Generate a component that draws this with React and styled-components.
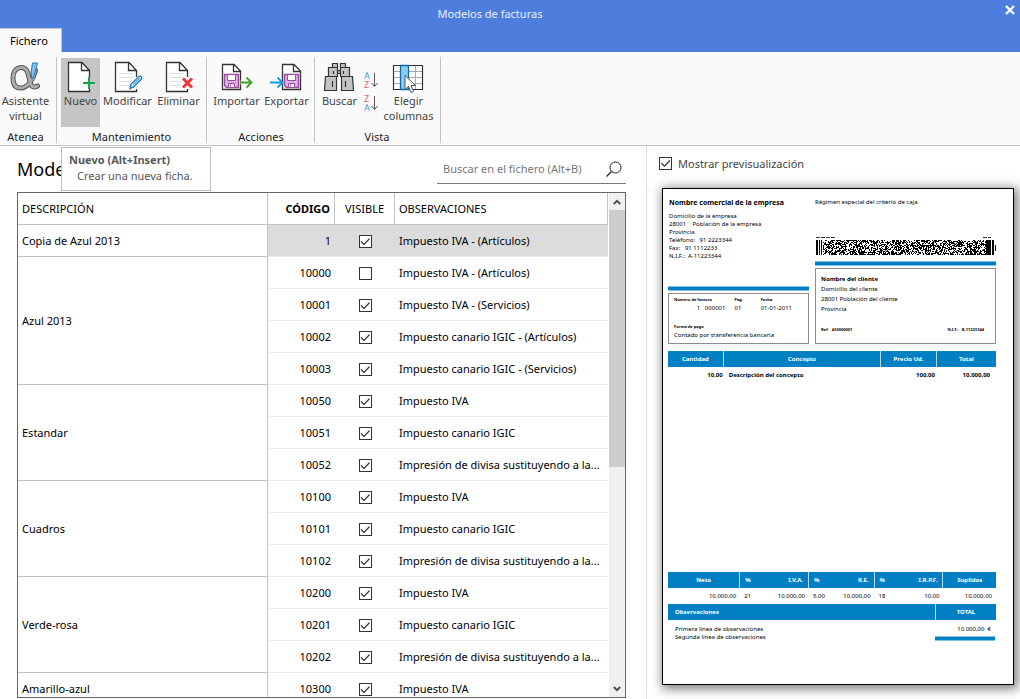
import React from "react";
import styled, { createGlobalStyle } from "styled-components";

const models = [
  {
    name: "Copia de Azul 2013",
    rows: [{ code: 1, visible: true, notes: "Impuesto IVA - (Artículos)", selected: true }],
  },
  {
    name: "Azul 2013",
    rows: [
      { code: 10000, visible: false, notes: "Impuesto IVA - (Artículos)" },
      { code: 10001, visible: true, notes: "Impuesto IVA - (Servicios)" },
      { code: 10002, visible: true, notes: "Impuesto canario IGIC - (Artículos)" },
      { code: 10003, visible: true, notes: "Impuesto canario IGIC - (Servicios)" },
    ],
  },
  {
    name: "Estandar",
    rows: [
      { code: 10050, visible: true, notes: "Impuesto IVA" },
      { code: 10051, visible: true, notes: "Impuesto canario IGIC" },
      { code: 10052, visible: true, notes: "Impresión de divisa sustituyendo a la..." },
    ],
  },
  {
    name: "Cuadros",
    rows: [
      { code: 10100, visible: true, notes: "Impuesto IVA" },
      { code: 10101, visible: true, notes: "Impuesto canario IGIC" },
      { code: 10102, visible: true, notes: "Impresión de divisa sustituyendo a la..." },
    ],
  },
  {
    name: "Verde-rosa",
    rows: [
      { code: 10200, visible: true, notes: "Impuesto IVA" },
      { code: 10201, visible: true, notes: "Impuesto canario IGIC" },
      { code: 10202, visible: true, notes: "Impresión de divisa sustituyendo a la..." },
    ],
  },
  {
    name: "Amarillo-azul",
    rows: [{ code: 10300, visible: true, notes: "Impuesto IVA" }],
  },
];

const App = () => (
  <Page>
    <GlobalStyle />
    <TitleBar>
      <WindowTitle>Modelos de facturas</WindowTitle>
      <CloseButton aria-label="Cerrar">
        <svg width="10" height="10" viewBox="0 0 10 10">
          <path d="M1 1l8 8M9 1l-8 8" stroke="#fff" strokeWidth="2.4" />
        </svg>
      </CloseButton>
      <Tab>Fichero</Tab>
    </TitleBar>
    <Ribbon />
    <Main>
      <ListPane>
        <ListHeader>
          <Heading>Modelos de facturas</Heading>
          <SearchBox>
            <SearchInput aria-label="Buscar" placeholder="Buscar en el fichero (Alt+B)" />
            <svg width="16" height="16" viewBox="0 0 16 16" fill="none" stroke="#222">
              <circle cx="9.5" cy="6.5" r="5.5" />
              <path d="M5.5 10.5L.5 15.5" strokeWidth="1.3" />
            </svg>
          </SearchBox>
        </ListHeader>
        <ModelTable />
      </ListPane>
      <PreviewPane>
        <PreviewToggle>
          <Checkbox defaultChecked />
          Mostrar previsualización
        </PreviewToggle>
        <Invoice />
      </PreviewPane>
    </Main>
  </Page>
);

const Ribbon = () => (
  <RibbonBar>
    <Group $start={0} $end={5}>
      <Tools>
        <Tool $width={51}>
          <AlphaIcon />
          <span>
            Asistente
            <br />
            virtual
          </span>
        </Tool>
      </Tools>
      <GroupLabel>Atenea</GroupLabel>
    </Group>
    <Group $start={4} $end={4}>
      <Tools>
        <TipAnchor>
          <Tool $width={39} $active>
            <NewIcon />
            <span>Nuevo</span>
          </Tool>
          <Tooltip role="tooltip">
            <strong>Nuevo (Alt+Insert)</strong>
            <p>Crear una nueva ficha.</p>
          </Tooltip>
        </TipAnchor>
        <Tool $width={55}>
          <EditIcon />
          <span>Modificar</span>
        </Tool>
        <Tool $width={47}>
          <DeleteIcon />
          <span>Eliminar</span>
        </Tool>
      </Tools>
      <GroupLabel>Mantenimiento</GroupLabel>
    </Group>
    <Group $start={4} $end={3}>
      <Tools>
        <Tool $width={51}>
          <ImportIcon />
          <span>Importar</span>
        </Tool>
        <Tool $width={49}>
          <ExportIcon />
          <span>Exportar</span>
        </Tool>
      </Tools>
      <GroupLabel>Acciones</GroupLabel>
    </Group>
    <Group $start={4} $end={5}>
      <Tools>
        <Tool $width={41}>
          <FindIcon />
          <span>Buscar</span>
        </Tool>
        <SortTools>
          <SortButton aria-label="Orden ascendente">
            <SortIcon top="A" bottom="Z" />
          </SortButton>
          <SortButton aria-label="Orden descendente">
            <SortIcon top="Z" bottom="A" />
          </SortButton>
        </SortTools>
        <Tool $width={53}>
          <ColumnsIcon />
          <span>
            Elegir
            <br />
            columnas
          </span>
        </Tool>
      </Tools>
      <GroupLabel>Vista</GroupLabel>
    </Group>
  </RibbonBar>
);

const ModelTable = () => (
  <TableFrame>
    <TableWrap>
      <Grid>
        <colgroup>
          <Col $width="250px" />
          <Col $width="67px" />
          <Col $width="60px" />
          <Col $width="auto" />
        </colgroup>
        <thead>
          <tr>
            <HeadCell>DESCRIPCIÓN</HeadCell>
            <HeadCell $align="right" $bold>CÓDIGO</HeadCell>
            <HeadCell $align="center">VISIBLE</HeadCell>
            <HeadCell>OBSERVACIONES</HeadCell>
          </tr>
        </thead>
        <tbody>
          {models.map((model) =>
            model.rows.map((row, i) => (
              <Row key={row.code} $selected={row.selected}>
                {i === 0 && <GroupCell rowSpan={model.rows.length}>{model.name}</GroupCell>}
                <Cell $align="right">{row.code}</Cell>
                <Cell $align="center">
                  <Checkbox defaultChecked={row.visible} aria-label={`Visible ${row.code}`} />
                </Cell>
                <Cell>{row.notes}</Cell>
              </Row>
            ))
          )}
        </tbody>
      </Grid>
    </TableWrap>
    <ScrollBar>
      <ScrollArrow aria-label="Subir">
        <svg width="8" height="6" viewBox="0 0 8 6" fill="none" stroke="#505050" strokeWidth="2">
          <path d="M.8 5L4 1.8 7.2 5" />
        </svg>
      </ScrollArrow>
      <ScrollThumb />
      <ScrollArrow aria-label="Bajar">
        <svg width="8" height="6" viewBox="0 0 8 6" fill="none" stroke="#505050" strokeWidth="2">
          <path d="M.8 1L4 4.2 7.2 1" />
        </svg>
      </ScrollArrow>
    </ScrollBar>
  </TableFrame>
);

const Invoice = () => (
  <Paper>
    <InvoiceTop>
      <InvoiceSide>
        <Company>Nombre comercial de la empresa</Company>
        <Address>
          Domicilio de la empresa
          <br />
          28001 &nbsp;&nbsp; Población de la empresa
          <br />
          Provincia
          <br />
          Teléfono: &nbsp; 91 2223344
          <br />
          Fax: &nbsp; 91 1112233
          <br />
          N.I.F.: &nbsp;A-11223344
        </Address>
        <Stripe $push />
        <NumberBox>
          <NumberGrid>
            <TinyLabel>Número de factura</TinyLabel>
            <TinyLabel>Pag.</TinyLabel>
            <TinyLabel>Fecha</TinyLabel>
            <NumberValue>1 &nbsp; 000001</NumberValue>
            <span>01</span>
            <span>01-01-2011</span>
          </NumberGrid>
          <div>
            <TinyLabel>Forma de pago</TinyLabel>
            <div>Contado por transferencia bancaria</div>
          </div>
        </NumberBox>
      </InvoiceSide>
      <InvoiceSide>
        <Regime>Régimen especial del criterio de caja</Regime>
        <Barcode />
        <Stripe />
        <ClientBox>
          <div>
            <strong>Nombre del cliente</strong>
            <br />
            Domicilio del cliente
            <br />
            28001 Población del cliente
            <br />
            Provincia
          </div>
          <ClientRefs>
            <TinyLabel>Ref: &nbsp; 430000001</TinyLabel>
            <TinyLabel>N.I.F.: &nbsp; B-11223344</TinyLabel>
          </ClientRefs>
        </ClientBox>
      </InvoiceSide>
    </InvoiceTop>

    <DocTable>
      <colgroup>
        <Col $width="17%" />
        <Col $width="48%" />
        <Col $width="17%" />
        <Col $width="18%" />
      </colgroup>
      <thead>
        <tr>
          <DocHead $divider>Cantidad</DocHead>
          <DocHead $divider>Concepto</DocHead>
          <DocHead $divider>Precio Ud.</DocHead>
          <DocHead>Total</DocHead>
        </tr>
      </thead>
      <tbody>
        <tr>
          <DocCell $bold $align="right" $pad={1}>10,00</DocCell>
          <DocCell $bold $pad={5}>Descripción del concepto</DocCell>
          <DocCell $bold $align="right" $pad={2}>100,00</DocCell>
          <DocCell $bold $align="right" $pad={6}>10.000,00</DocCell>
        </tr>
      </tbody>
    </DocTable>

    <Footer>
      <DocTable>
        <colgroup>
          <Col $width="22%" />
          <Col $width="7%" />
          <Col $width="14%" />
          <Col $width="6%" />
          <Col $width="14%" />
          <Col $width="6%" />
          <Col $width="15%" />
          <Col $width="16%" />
        </colgroup>
        <thead>
          <tr>
            <DocHead $divider>Neto</DocHead>
            <DocHead $align="left">%</DocHead>
            <DocHead $align="right" $divider>I.V.A.</DocHead>
            <DocHead $align="left">%</DocHead>
            <DocHead $align="right" $divider>R.E.</DocHead>
            <DocHead $align="left">%</DocHead>
            <DocHead $align="right" $divider>I.R.P.F.</DocHead>
            <DocHead>Suplidos</DocHead>
          </tr>
        </thead>
        <tbody>
          <tr>
            <DocCell $align="right">10.000,00</DocCell>
            <DocCell>21</DocCell>
            <DocCell $align="right">10.000,00</DocCell>
            <DocCell>5,00</DocCell>
            <DocCell $align="right">10.000,00</DocCell>
            <DocCell>18</DocCell>
            <DocCell $align="right">10,00</DocCell>
            <DocCell $align="right">10.000,00</DocCell>
          </tr>
        </tbody>
      </DocTable>
      <NotesHead>
        <NotesTitle>Observaciones</NotesTitle>
        <TotalTitle>TOTAL</TotalTitle>
      </NotesHead>
      <NotesBody>
        <div>
          Primera línea de observaciones
          <br />
          Segunda línea de observaciones
        </div>
        <Total>
          <TotalValue>10.000,00 &nbsp;€</TotalValue>
          <Stripe />
        </Total>
      </NotesBody>
    </Footer>
  </Paper>
);

/* dense matrix code: guard bars at both ends, noise in the middle */
const Barcode = () => {
  let seed = 7;
  let d = "M1 4h2v15h-2zM4 4h1v15h-1zM6 4h1v15h-1zM171 4h5v15h-5zM177 4h2v15h-2zM180 9h1v6h-1z";
  for (let y = 4; y < 19; y += 1) {
    for (let x = 8; x < 171; x += 1) {
      seed ^= seed << 13;
      seed ^= seed >>> 17;
      seed ^= seed << 5;
      if ((seed >>> 0) % 100 < 54) d += `M${x} ${y}h1v1h-1z`;
    }
  }
  return (
    <BarcodeSvg viewBox="0 0 181 20" preserveAspectRatio="none" shapeRendering="crispEdges">
      <path d={d} />
      <path d="M1 1.5h19M168 1.5h8" stroke="#333" strokeDasharray="4 1" />
    </BarcodeSvg>
  );
};

const Icon = ({ children }) => (
  <svg width="33" height="32" viewBox="0 0 33 32" fill="none">
    {children}
  </svg>
);

const Sheet = ({ lines }) => (
  <>
    <path d="M4.5 1.5H18L25.5 9.5V30.5H4.5z" fill="#fff" />
    <path d="M25.5 16V9.5L18 1.5H4.5V30.5H25.5V28M17.5 1.5V9.5H25.5" stroke="#333" strokeWidth="1.3" />
    {lines && <path d="M8 12.5h14M8 16.5h14M8 20.5h12M8 24.5h11" stroke="#ddd" />}
  </>
);

const AlphaIcon = () => (
  <Icon>
    {["#555", "#aaa"].map((color, i) => (
      <path
        key={color}
        d="M26.5 9.5C24.5 18 19 27 11.5 27C6 27 4 22.5 4 17C4 11 7 6.5 12.5 6.5C18 6.5 19 12 20.5 18.5C21.5 24 23 28 28.5 25"
        stroke={color}
        strokeWidth={i ? 3 : 5}
        strokeLinecap="round"
      />
    ))}
    <path d="M23.5 2H28.5L25.5 14L23 18L22 12z" fill="#7fc0f2" stroke="#1b78c0" />
  </Icon>
);

const NewIcon = () => (
  <Icon>
    <Sheet />
    <path d="M25 16v12M19 22h12" stroke="#10a64a" strokeWidth="2" />
  </Icon>
);

const EditIcon = () => (
  <Icon>
    <Sheet lines />
    <path d="M19 27.5L20 23L28 15.5C30 14.5 31.5 16 30.5 18L22.5 26z" fill="#d9eefb" stroke="#1c80c8" strokeWidth="1.4" />
    <path d="M22 23.5L28.5 17.5" stroke="#1c80c8" />
  </Icon>
);

const DeleteIcon = () => (
  <Icon>
    <Sheet lines />
    <path d="M21 17.5l9 9M30 17.5l-9 9" stroke="#ee3838" strokeWidth="3" />
  </Icon>
);

const DiskSheet = () => (
  <>
    <path d="M2.5 3.5H14L20.5 10V28.5H2.5z" fill="#fff" stroke="#333" strokeWidth="1.3" />
    <path d="M13.5 3.5V10.5H20.5" stroke="#333" strokeWidth="1.3" />
    <path d="M4.5 13.5H18.5V26.5H6.5L4.5 24.5z" fill="#dbb3df" stroke="#9a4aa2" strokeWidth="1.4" />
    <path d="M7.5 13.5H15.5V19.5H7.5zM8.5 22.5H14.5V26.5H8.5z" fill="#fff" stroke="#9a4aa2" />
    <path d="M10.5 23.5v2" stroke="#9a4aa2" />
  </>
);

const ImportIcon = () => (
  <Icon>
    <DiskSheet />
    <path d="M20.5 21.5H31M27 16l5 5.5L27 27" stroke="#fafafa" strokeWidth="4" />
    <path d="M20 21.5H31M26.5 16.5l5 5L26.5 26.5" stroke="#43a02c" strokeWidth="1.8" />
  </Icon>
);

const ExportIcon = () => (
  <Icon>
    <g transform="translate(10 0)">
      <DiskSheet />
    </g>
    <path d="M0 21.5H12M7.5 16.5l5 5L7.5 26.5" stroke="#0d9fe0" strokeWidth="1.8" />
  </Icon>
);

const FindIcon = () => (
  <Icon>
    <g fill="#c3c3c3" stroke="#333" strokeWidth="1.2">
      <path d="M14.5 9.5H17.5V12.5H14.5z" />
      <path d="M9.5 2.5H14.5V6.5H9.5zM17.5 2.5H22.5V6.5H17.5z" />
      <path d="M5.5 6.5H14.5V15.5H5.5zM17.5 6.5H26.5V15.5H17.5z" />
      <path d="M2.5 15.5H13.5V29.5H1.5zM18.5 15.5H29.5L30.5 29.5H18.5z" />
      <path d="M10.5 10v3M20.5 10v3M9.5 20v6M22.5 20v6" />
    </g>
  </Icon>
);

const letterColors = { A: "#3d9bdc", Z: "#ee5a5a" };

const SortIcon = ({ top, bottom }) => (
  <SortSvg width="16" height="18" viewBox="0 0 16 18">
    <text x="0" y="8" fill={letterColors[top]}>{top}</text>
    <text x="0" y="17" fill={letterColors[bottom]}>{bottom}</text>
    <path d="M10.5 2v13M7.5 12l3 3.5 3-3.5" fill="none" stroke="#555" />
  </SortSvg>
);

const ColumnsIcon = () => (
  <Icon>
    <path d="M1.5 4.5H30.5V28.5H1.5z" fill="#fff" />
    <path d="M2 10.5H30M2 16.5H30M2 22.5H30M23.5 5V28" stroke="#aaa" />
    <path d="M1.5 4.5H30.5V28.5H1.5z" stroke="#333" strokeWidth="1.2" />
    <path d="M8.5 4.5H16.5V28.5H8.5z" fill="#8ecbf2" stroke="#1468ac" strokeWidth="1.3" />
    <path d="M13 14.5V28.5L16.5 25.5L19 31.5L21.5 30.5L19 24.5H23.5z" fill="#fff" stroke="#555" />
  </Icon>
);

export default App;

// page frame
const GlobalStyle = createGlobalStyle`
  * {
    box-sizing: border-box;
  }

  body {
    margin: 0;
    background: #fff;
    color: #000;
    font-family: "Noto Sans", "Open Sans", sans-serif;
    font-size: 11px;
  }

  button, input {
    font: inherit;
    color: inherit;
    padding: 0;
    border: none;
    background: none;
  }
`;

const Page = styled.div`
  display: flex;
  flex-direction: column;
  height: 100vh;
  overflow: hidden;
`;

const TitleBar = styled.header`
  display: grid;
  grid-template-columns: 1fr 30px;
  grid-template-rows: 28px 24px;
  background: #4e7edd;
`;

const WindowTitle = styled.div`
  padding-right: 10px;
  color: #e9effb;
  line-height: 28px;
  text-align: center;
`;

const CloseButton = styled.button`
  display: flex;
  justify-content: flex-end;
  padding: 5px;
`;

const Tab = styled.button`
  justify-self: start;
  padding: 0 13px 0 10px;
  border-top: 1px solid #c6c6c6;
  border-right: 1px solid #c6c6c6;
  background: #fafafa;
`;

// ribbon
const RibbonBar = styled.div`
  display: flex;
  padding: 5px 0 2px;
  border-bottom: 1px solid #c3c3c3;
  background: #fafafa;
`;

const Group = styled.div`
  display: flex;
  flex-direction: column;
  padding: 1px ${(p) => p.$end}px 0 ${(p) => p.$start}px;
  border-right: 1px solid #c3c3c3;
`;

const Tools = styled.div`
  display: flex;
`;

const Tool = styled.button`
  display: flex;
  flex-direction: column;
  align-items: center;
  width: ${(p) => p.$width}px;
  height: 69px;
  padding-top: 3px;
  background: ${(p) => (p.$active ? "#c5c5c5" : "transparent")};
  color: #444;
  line-height: 15px;
  text-align: center;
  white-space: nowrap;
`;

const GroupLabel = styled.div`
  margin-top: 4px;
  color: #222;
  line-height: 12px;
  text-align: center;
`;

const SortTools = styled.div`
  display: flex;
  flex-direction: column;
  gap: 4px;
  padding: 13px 0 0 2px;
`;

const SortButton = styled.button`
  width: 20px;
  height: 19px;
`;

const SortSvg = styled.svg`
  font-size: 9px;
  overflow: visible;
`;

const TipAnchor = styled.div`
  position: relative;
`;

const Tooltip = styled.div`
  position: absolute;
  z-index: 2;
  top: 89px;
  left: 0;
  width: 150px;
  padding: 4px 7px 6px;
  border: 1px solid #bdbdbd;
  background: #fff;
  color: #575757;
  line-height: 16px;
  white-space: nowrap;

  p {
    margin: 0 0 0 8px;
  }
`;

// list of models
const Main = styled.main`
  display: grid;
  grid-template-columns: minmax(0, 647fr) minmax(0, 373fr);
  flex: 1;
  min-height: 0;
`;

const ListPane = styled.section`
  display: flex;
  flex-direction: column;
  min-height: 0;
  padding: 0 20px 1px 17px;
  border-right: 1px solid #dcdcdc;
`;

const ListHeader = styled.div`
  display: flex;
  align-items: flex-start;
  justify-content: space-between;
  height: 46px;
  padding-top: 8px;
`;

const Heading = styled.h1`
  margin: 0;
  font-size: 18px;
  font-weight: 400;
  line-height: 30px;
`;

const SearchBox = styled.div`
  display: flex;
  align-items: center;
  width: 189px;
  height: 30px;
  padding: 0 4px 0 6px;
  border-bottom: 1px solid #7a7a7a;
`;

const SearchInput = styled.input`
  flex: 1;
  min-width: 0;
  outline: none;

  &::placeholder {
    color: #777;
  }
`;

const TableFrame = styled.div`
  display: flex;
  flex: 1;
  min-height: 0;
  border: 1px solid #666;
`;

const TableWrap = styled.div`
  flex: 1;
  min-width: 0;
  margin-right: 1px;
  overflow: hidden;
`;

const Grid = styled.table`
  width: 100%;
  border-spacing: 0;
  table-layout: fixed;
`;

const Col = styled.col`
  width: ${(p) => p.$width};
`;

const Cell = styled.td`
  height: 32px;
  padding: 0 4px;
  border-bottom: 1px solid #ececec;
  text-align: ${(p) => p.$align || "left"};
  white-space: nowrap;
`;

const GroupCell = styled(Cell)`
  border-right: 1px solid #c3c3c3;
  border-bottom-color: #c3c3c3;
  background: #fff;
`;

const HeadCell = styled(Cell).attrs({ as: "th" })`
  border-right: 1px solid #c3c3c3;
  border-bottom-color: #c3c3c3;
  font-weight: ${(p) => (p.$bold ? 700 : 400)};
`;

const Row = styled.tr`
  background: ${(p) => (p.$selected ? "#dcdcdc" : "#fff")};
`;

const Checkbox = styled.input.attrs({ type: "checkbox" })`
  appearance: none;
  width: 13px;
  height: 13px;
  margin: 0;
  border: 1px solid #333;
  background: #fff;
  vertical-align: middle;

  &:checked::before {
    content: "";
    display: block;
    width: 11px;
    height: 11px;
    background: #333;
    clip-path: polygon(9% 50%, 18% 43%, 40% 66%, 86% 18%, 94% 27%, 40% 82%);
  }
`;

const ScrollBar = styled.div`
  display: flex;
  flex-direction: column;
  width: 16px;
  background: #f0f0f0;
`;

const ScrollThumb = styled.div`
  flex: 0 0 51%;
  margin-bottom: auto;
  background: #cdcdcd;
`;

const ScrollArrow = styled.button`
  display: flex;
  align-items: center;
  justify-content: center;
  height: 17px;
`;

// preview
const PreviewPane = styled.section`
  padding: 0 6px 0 15px;
`;

const PreviewToggle = styled.label`
  display: flex;
  align-items: center;
  gap: 6px;
  height: 35px;
  margin: 0 0 7px -3px;
  color: #444;
`;

const Paper = styled.article`
  display: flex;
  flex-direction: column;
  aspect-ratio: 352 / 497;
  padding: 8px 17px 43px 5px;
  border: 1px solid #000;
  background: #fff;
  box-shadow: 2px 2px 10px 2px rgba(0, 0, 0, 0.5);
  font-size: 6px;
  line-height: 8px;
`;

const InvoiceTop = styled.div`
  display: grid;
  grid-template-columns: 141fr 181fr;
  gap: 6px;
  height: 147px;
  margin-bottom: 7px;
`;

const InvoiceSide = styled.div`
  display: flex;
  flex-direction: column;
  min-width: 0;
`;

const Company = styled.strong`
  padding-left: 1px;
  font-size: 7px;
  line-height: 12px;
  white-space: nowrap;
`;

const Address = styled.div`
  padding: 3px 0 0 1px;
`;

const Regime = styled.div`
  padding-top: 1px;
`;

const Stripe = styled.div`
  height: 5px;
  margin-top: ${(p) => (p.$push ? "auto" : "0")};
  border: solid #7fc0e2;
  border-width: 1px 0;
  background: #0080c4;
`;

const Box = styled.div`
  display: flex;
  flex-direction: column;
  justify-content: space-between;
  margin-top: 2px;
  border: 1px solid #8c8c8c;
`;

const NumberBox = styled(Box)`
  height: 51px;
  padding: 2px 5px 4px;
`;

const NumberGrid = styled.div`
  display: grid;
  grid-template-columns: 60fr 26fr 42fr;
  white-space: nowrap;
`;

const NumberValue = styled.span`
  padding-right: 9px;
  text-align: right;
`;

const TinyLabel = styled.div`
  font-size: 4px;
  font-weight: 700;
`;

const ClientBox = styled(Box)`
  height: 76px;
  padding: 5px 11px 8px 5px;
  line-height: 10px;
`;

const ClientRefs = styled.div`
  display: flex;
  justify-content: space-between;
`;

const BarcodeSvg = styled.svg`
  width: 100%;
  height: 20px;
  margin: auto 0 5px;
`;

const DocTable = styled.table`
  width: 100%;
  border-spacing: 0;
  table-layout: fixed;
`;

const DocHead = styled.th`
  height: 16px;
  padding: 0 5px;
  border-right: ${(p) => (p.$divider ? "1px solid #b5dcf0" : "none")};
  background: #0080c4;
  color: #fff;
  text-align: ${(p) => p.$align || "center"};
  white-space: nowrap;
`;

const DocCell = styled.td`
  height: 16px;
  padding: 0 ${(p) => p.$pad || 4}px;
  font-weight: ${(p) => (p.$bold ? 700 : 400)};
  text-align: ${(p) => p.$align || "left"};
  white-space: nowrap;
`;

const Footer = styled.div`
  margin-top: auto;
`;

const NotesHead = styled.div`
  display: flex;
  background: #0080c4;
  color: #fff;
  font-weight: 700;
  line-height: 16px;
`;

const NotesTitle = styled.div`
  flex: 1;
  padding-left: 7px;
`;

const TotalTitle = styled.div`
  width: 61px;
  border-left: 1px solid #b5dcf0;
  text-align: center;
`;

const NotesBody = styled.div`
  display: flex;
  justify-content: space-between;
  padding: 5px 1px 0 7px;
`;

const Total = styled.div`
  width: 60px;
`;

const TotalValue = styled.div`
  height: 11px;
  padding-right: 4px;
  text-align: right;
`;
